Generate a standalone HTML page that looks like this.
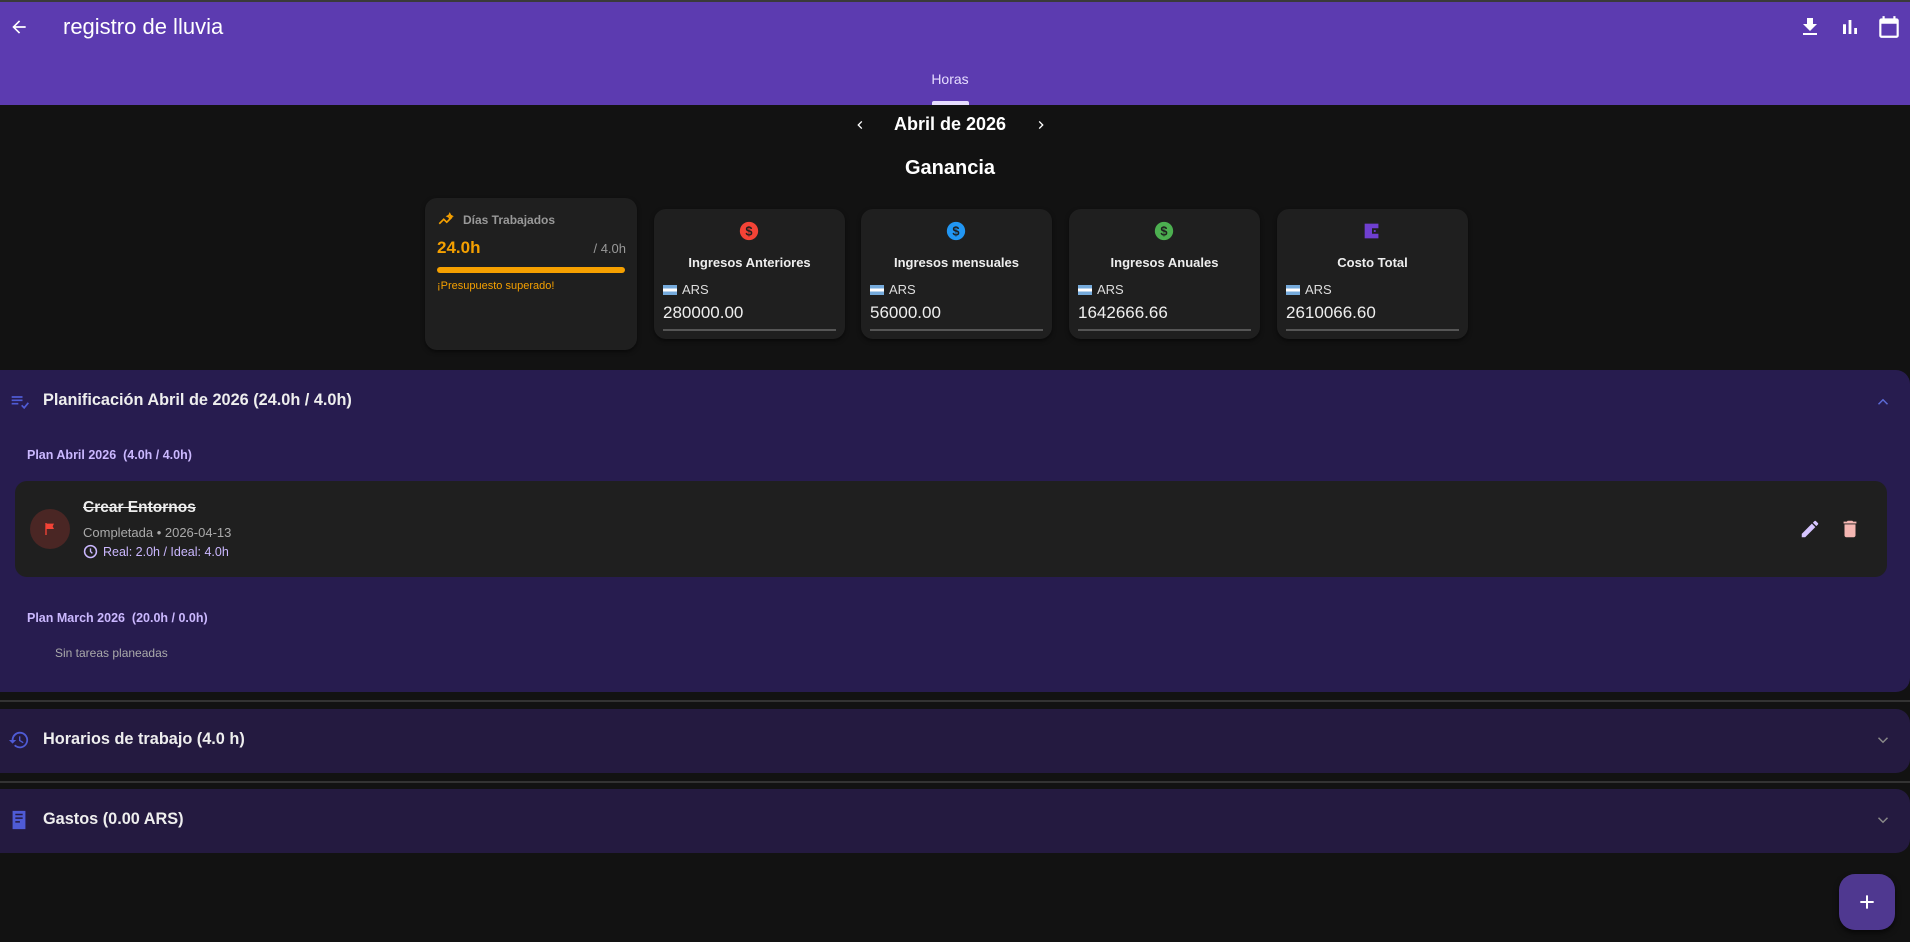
<!DOCTYPE html>
<html><head><meta charset="utf-8"><style>
*{margin:0;padding:0;box-sizing:border-box}
body{width:1910px;height:942px;background:#121212;font-family:"Liberation Sans",sans-serif;color:#fff;position:relative;overflow:hidden}
.abs{position:absolute}
.top{left:0;top:0;width:1910px;height:105px;background:#5c3bb0;border-top:2px solid #3a3a3a}
.card{background:#1f1f1f;border-radius:12px;box-shadow:0 2px 4px rgba(0,0,0,.5)}
.mc{text-align:center}
.mc .t{position:absolute;left:0;right:0;top:46px;font-size:13px;font-weight:bold;color:#eee}
.mc .cur{position:absolute;left:9px;top:73px;font-size:13px;color:#ddd;display:flex;align-items:center;gap:5px}
.mc .v{position:absolute;left:9px;top:94px;font-size:17px;color:#eee}
.mc .ln{position:absolute;left:9px;right:9px;top:120px;height:2px;background:#555}
.flag{display:inline-block;width:14px;height:10px;background:linear-gradient(#75aadb 33%,#fff 33%,#fff 66%,#75aadb 66%)}
.sec{left:0;width:1910px;border-radius:0 14px 14px 0}
.st{font-size:16.3px;font-weight:bold;color:#eee}
</style></head><body>
<div class="abs top"></div>
<svg class="abs" style="left:9px;top:17px" width="20" height="20" viewBox="0 0 24 24"><path d="M20 11H7.8l5.6-5.6L12 4l-8 8 8 8 1.4-1.4L7.8 13H20z" fill="#fff"/></svg>
<div class="abs" style="left:63px;top:14px;font-size:22px;color:#fff">registro de lluvia</div>
<svg class="abs" style="left:1798px;top:15px" width="24" height="24" viewBox="0 0 24 24"><path d="M19 9h-4V3H9v6H5l7 7 7-7zM5 18v2h14v-2z" fill="#fff"/></svg>
<svg class="abs" style="left:1838px;top:15px" width="24" height="24" viewBox="0 0 24 24"><path d="M5 9.2h3V19H5zM10.6 5h2.8v14h-2.8zm5.6 8H19v6h-2.8z" fill="#fff"/></svg>
<svg class="abs" style="left:1876px;top:14px" width="26" height="26" viewBox="0 0 24 24"><path d="M19 4h-1V2h-2v2H8V2H6v2H5c-1.1 0-2 .9-2 2v14c0 1.1.9 2 2 2h14c1.1 0 2-.9 2-2V6c0-1.1-.9-2-2-2zm0 16H5V9h14z" fill="#fff"/></svg>
<div class="abs" style="left:900px;top:71px;width:100px;text-align:center;font-size:14px;color:#e6ddff">Horas</div>
<div class="abs" style="left:932px;top:101px;width:37px;height:4px;background:#e6ddff;border-radius:2px 2px 0 0"></div>

<svg class="abs" style="left:852px;top:117px" width="16" height="16" viewBox="0 0 24 24"><path d="M15.4 7.4 14 6l-6 6 6 6 1.4-1.4-4.6-4.6z" fill="#fff"/></svg>
<div class="abs" style="left:870px;top:114px;width:160px;text-align:center;font-size:18px;font-weight:bold">Abril de 2026</div>
<svg class="abs" style="left:1033px;top:117px" width="16" height="16" viewBox="0 0 24 24"><path d="M8.6 16.6 10 18l6-6-6-6-1.4 1.4 4.6 4.6z" fill="#fff"/></svg>
<div class="abs" style="left:850px;top:157px;width:200px;text-align:center;font-size:20px;font-weight:bold">Ganancia</div>

<div class="abs card" style="left:425px;top:198px;width:212px;height:152px">
<svg class="abs" style="left:12px;top:13px" width="18" height="18" viewBox="0 0 24 24"><path d="M3 17l6-6 4 4 7-7M17 4l1 2 2 1-2 1-1 2-1-2-2-1 2-1z" stroke="#f5a000" stroke-width="2.2" fill="none"/></svg>
<div class="abs" style="left:38px;top:15px;font-size:12px;font-weight:bold;color:#999">Días Trabajados</div>
<div class="abs" style="left:12px;top:40px;font-size:17px;font-weight:bold;color:#f5a000">24.0h</div>
<div class="abs" style="right:11px;top:43px;font-size:13px;color:#999">/ 4.0h</div>
<div class="abs" style="left:12px;top:69px;width:188px;height:6px;background:#f5a000;border-radius:3px"></div>
<div class="abs" style="left:12px;top:82px;font-size:11px;color:#f5a000">¡Presupuesto superado!</div>
</div>

<div class="abs card mc" style="left:654px;top:209px;width:191px;height:130px">
<svg class="abs" style="left:84px;top:11px" width="22" height="22" viewBox="0 0 24 24"><circle cx="12" cy="12" r="10" fill="#f44336"/><text x="12" y="17" font-size="14" font-weight="bold" text-anchor="middle" fill="#1f1f1f" font-family="Liberation Sans">$</text></svg>
<div class="t">Ingresos Anteriores</div><div class="cur"><span class="flag"></span>ARS</div><div class="v">280000.00</div><div class="ln"></div></div>
<div class="abs card mc" style="left:861px;top:209px;width:191px;height:130px">
<svg class="abs" style="left:84px;top:11px" width="22" height="22" viewBox="0 0 24 24"><circle cx="12" cy="12" r="10" fill="#2196f3"/><text x="12" y="17" font-size="14" font-weight="bold" text-anchor="middle" fill="#1f1f1f" font-family="Liberation Sans">$</text></svg>
<div class="t">Ingresos mensuales</div><div class="cur"><span class="flag"></span>ARS</div><div class="v">56000.00</div><div class="ln"></div></div>
<div class="abs card mc" style="left:1069px;top:209px;width:191px;height:130px">
<svg class="abs" style="left:84px;top:11px" width="22" height="22" viewBox="0 0 24 24"><circle cx="12" cy="12" r="10" fill="#4caf50"/><text x="12" y="17" font-size="14" font-weight="bold" text-anchor="middle" fill="#1f1f1f" font-family="Liberation Sans">$</text></svg>
<div class="t">Ingresos Anuales</div><div class="cur"><span class="flag"></span>ARS</div><div class="v">1642666.66</div><div class="ln"></div></div>
<div class="abs card mc" style="left:1277px;top:209px;width:191px;height:130px">
<svg class="abs" style="left:84px;top:11px" width="22" height="22" viewBox="0 0 24 24"><path d="M4 4h15v16H4z" fill="#6f3fd0"/><path d="M12 9h8v6h-8z" fill="#1f1f1f"/><rect x="14" y="11" width="2" height="2" fill="#6f3fd0"/></svg>
<div class="t">Costo Total</div><div class="cur"><span class="flag"></span>ARS</div><div class="v">2610066.60</div><div class="ln"></div></div>

<div class="abs sec" style="top:370px;height:322px;background:#271c4f"></div>
<svg class="abs" style="left:9px;top:392px" width="22" height="20" viewBox="0 0 24 24"><path d="M2 6h13M2 10h13M2 14h8M14 16l3 3 5-6" stroke="#4f5bd5" stroke-width="2" fill="none"/></svg>
<div class="abs st" style="left:43px;top:391px">Planificación Abril de 2026 (24.0h / 4.0h)</div>
<svg class="abs" style="left:1874px;top:393px" width="18" height="18" viewBox="0 0 24 24"><path d="M6 15l6-6 6 6" stroke="#5c6bd6" stroke-width="2" fill="none"/></svg>
<div class="abs" style="left:27px;top:448px;font-size:12.5px;font-weight:bold;color:#cbb8ff">Plan Abril 2026&nbsp; (4.0h / 4.0h)</div>
<div class="abs" style="left:15px;top:481px;width:1872px;height:96px;background:#1f1f1f;border-radius:12px"></div>
<div class="abs" style="left:30px;top:509px;width:40px;height:40px;border-radius:50%;background:#4a2624"></div>
<svg class="abs" style="left:42px;top:521px" width="16" height="16" viewBox="0 0 24 24"><path d="M5 3h2v18H5zM7 4h11l-2 4 2 4H7z" fill="#f44336"/></svg>
<div class="abs" style="left:83px;top:499px;font-size:15.5px;font-weight:bold;color:#eee;text-decoration:line-through">Crear Entornos</div>
<div class="abs" style="left:83px;top:525px;font-size:13px;color:#aaa">Completada • 2026-04-13</div>
<svg class="abs" style="left:83px;top:544px" width="15" height="15" viewBox="0 0 24 24"><circle cx="12" cy="12" r="9.5" stroke="#cbb8ff" stroke-width="2.4" fill="none"/><path d="M12 7v5l3 3" stroke="#cbb8ff" stroke-width="2.2" fill="none"/></svg>
<div class="abs" style="left:103px;top:545px;font-size:12.5px;color:#cbb8ff">Real: 2.0h / Ideal: 4.0h</div>
<svg class="abs" style="left:1799px;top:518px" width="22" height="22" viewBox="0 0 24 24"><path d="M3 17.25V21h3.75L17.8 9.94l-3.75-3.75zM20.7 7.04a1 1 0 000-1.41l-2.34-2.34a1 1 0 00-1.41 0l-1.83 1.83 3.75 3.75z" fill="#d6c5ff"/></svg>
<svg class="abs" style="left:1839px;top:518px" width="22" height="22" viewBox="0 0 24 24"><path d="M6 19c0 1.1.9 2 2 2h8c1.1 0 2-.9 2-2V7H6zM19 4h-3.5l-1-1h-5l-1 1H5v2h14z" fill="#f4b6b2"/></svg>
<div class="abs" style="left:27px;top:611px;font-size:12.5px;font-weight:bold;color:#cbb8ff">Plan March 2026&nbsp; (20.0h / 0.0h)</div>
<div class="abs" style="left:55px;top:646px;font-size:12px;color:#aaa">Sin tareas planeadas</div>

<div class="abs" style="left:0;top:700px;width:1910px;height:2px;background:#333"></div>
<div class="abs sec" style="top:709px;height:64px;background:#241a40"></div>
<svg class="abs" style="left:8px;top:729px" width="22" height="22" viewBox="0 0 24 24"><path d="M13 3a9 9 0 00-9 9H1l4 4 4-4H6a7 7 0 112 5l-1.4 1.4A9 9 0 1013 3zm-1 5v5l4.3 2.5.7-1.2-3.5-2.1V8z" fill="#4f5bd5"/></svg>
<div class="abs st" style="left:43px;top:730px">Horarios de trabajo (4.0 h)</div>
<svg class="abs" style="left:1874px;top:731px" width="18" height="18" viewBox="0 0 24 24"><path d="M6 9l6 6 6-6" stroke="#888" stroke-width="2" fill="none"/></svg>
<div class="abs" style="left:0;top:781px;width:1910px;height:2px;background:#333"></div>
<div class="abs sec" style="top:789px;height:64px;background:#241a40"></div>
<svg class="abs" style="left:8px;top:809px" width="22" height="22" viewBox="0 0 24 24"><path d="M5 2h14v20H5z" fill="#4f5bd5"/><path d="M8 6h8M8 10h8M8 14h5" stroke="#241a40" stroke-width="1.6"/></svg>
<div class="abs st" style="left:43px;top:810px">Gastos (0.00 ARS)</div>
<svg class="abs" style="left:1874px;top:811px" width="18" height="18" viewBox="0 0 24 24"><path d="M6 9l6 6 6-6" stroke="#888" stroke-width="2" fill="none"/></svg>

<div class="abs" style="left:1839px;top:874px;width:56px;height:56px;border-radius:16px;background:#4f3890;box-shadow:0 3px 6px rgba(0,0,0,.6)"></div>
<svg class="abs" style="left:1857px;top:892px" width="20" height="20" viewBox="0 0 24 24"><path d="M12 4v16M4 12h16" stroke="#fff" stroke-width="2.4"/></svg>
</body></html>
